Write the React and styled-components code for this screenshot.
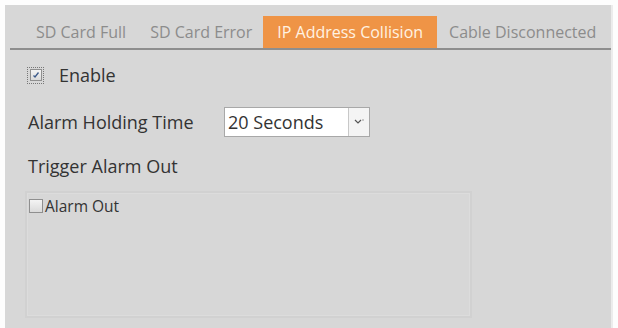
import React from "react";
import styled, { createGlobalStyle } from "styled-components";

const Global = createGlobalStyle`
  html, body { margin: 0; padding: 0; background: #fdfdfd; }
  body { font-family: "Open Sans", "Noto Sans", sans-serif; }
`;

const Page = styled.div`
  width: 618px;
  height: 328px;
  padding: 5px 5px 0 5px;
  box-sizing: border-box;
  overflow: hidden;
`;

const Panel = styled.div`
  background: #d7d7d7;
  height: 323px;
  width: 608px;
  padding: 11px 0 0 5px;
  box-sizing: border-box;
  border-right: 2px solid #ececec;
  display: flex;
  flex-direction: column;
`;

const TabBar = styled.div`
  display: flex;
  align-items: flex-end;
  height: 32px;
  border-bottom: 2px solid #8e8e8e;
  padding-left: 14px;
`;

const Tab = styled.div`
  height: 32px;
  display: flex;
  align-items: center;
  padding: 0 ${(p) => (p.$active ? 14 : 12)}px;
  margin-left: ${(p) => (p.$active ? -1 : 0)}px;
  font-size: 16px;
  color: ${(p) => (p.$active ? "#fff2e2" : "#8c8c8c")};
  background: ${(p) => (p.$active ? "#ef9446" : "transparent")};
  white-space: nowrap;
`;

const Body = styled.div`
  display: flex;
  flex-direction: column;
  padding: 14px 0 0 18px;
`;

const Row = styled.div`
  display: flex;
  align-items: center;
  height: ${(p) => p.$h}px;
  margin-bottom: ${(p) => p.$mb || 0}px;
`;

const Label = styled.span`
  font-size: ${(p) => p.$fs || 18}px;
  color: #333;
  width: ${(p) => (p.$w ? `${p.$w}px` : "auto")};
  white-space: nowrap;
`;

const FocusBox = styled.span`
  display: inline-flex;
  align-items: center;
  justify-content: center;
  width: 17px;
  height: 17px;
  border: 1px dotted #777;
  margin: 0 15px 0 -1px;
  box-sizing: border-box;
`;

const Check = styled.span`
  display: inline-flex;
  align-items: center;
  justify-content: center;
  width: ${(p) => p.$s}px;
  height: ${(p) => p.$s}px;
  box-sizing: border-box;
  border: 1px solid #8f8f8f;
  background: linear-gradient(#f4f4f4, #dadada);
`;

const Select = styled.div`
  display: flex;
  width: 146px;
  height: 30px;
  box-sizing: border-box;
  border: 1px solid #a8a8a8;
  background: #fff;
`;

const SelectText = styled.div`
  flex: 1;
  display: flex;
  align-items: center;
  padding-left: 3px;
  font-size: 18px;
  color: #333;
`;

const SelectBtn = styled.div`
  width: 20px;
  border-left: 1px solid #c8c8c8;
  background: #f4f4f4;
  display: flex;
  align-items: center;
  justify-content: center;
`;

const AlarmBox = styled.div`
  width: 447px;
  height: 127px;
  margin-left: -3px;
  box-sizing: border-box;
  border: 2px solid #d1d1d1;
  box-shadow: inset 0 0 0 1px #dcdcdc;
  padding: 2px 0 0 2px;
`;

const AlarmRow = styled.div`
  display: flex;
  align-items: center;
  gap: 2px;
`;

export default function App() {
  return (
    <>
      <Global />
      <Page>
        <Panel>
          <TabBar>
            <Tab>SD Card Full</Tab>
            <Tab>SD Card Error</Tab>
            <Tab $active>IP Address Collision</Tab>
            <Tab>Cable Disconnected</Tab>
          </TabBar>
          <Body>
            <Row $h={22} $mb={21}>
              <FocusBox>
                <Check $s={12}>
                  <svg width="8" height="8" viewBox="0 0 8 8">
                    <path d="M1.5 4.5 L3 6 L6.5 1.5" fill="none" stroke="#3c5a8a" strokeWidth="1.3" />
                  </svg>
                </Check>
              </FocusBox>
              <Label>Enable</Label>
            </Row>
            <Row $h={30} $mb={18}>
              <Label $w={196}>Alarm Holding Time</Label>
              <Select>
                <SelectText>20 Seconds</SelectText>
                <SelectBtn>
                  <svg width="10" height="8" viewBox="0 0 10 8">
                    <path d="M1 2 L4 5 L7 2" fill="none" stroke="#555" strokeWidth="1.2" />
                    <circle cx="9" cy="2" r="0.7" fill="#777" />
                  </svg>
                </SelectBtn>
              </Select>
            </Row>
            <Row $h={22} $mb={14}>
              <Label>Trigger Alarm Out</Label>
            </Row>
            <AlarmBox>
              <AlarmRow>
                <Check $s={14} />
                <Label $fs={15.5}>Alarm Out</Label>
              </AlarmRow>
            </AlarmBox>
          </Body>
        </Panel>
      </Page>
    </>
  );
}
